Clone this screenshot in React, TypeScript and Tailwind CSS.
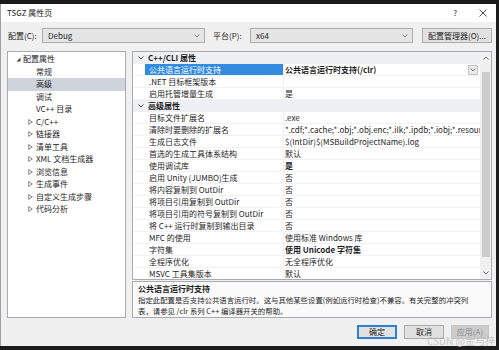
import React from 'react'

type Row = { cat?: string; name?: string; value?: string; bold?: boolean; selected?: boolean }

const rows: Row[] = [
  { cat: 'C++/CLI 属性' },
  { name: '公共语言运行时支持', value: '公共语言运行时支持(/clr)', bold: true, selected: true },
  { name: '.NET 目标框架版本', value: '' },
  { name: '启用托管增量生成', value: '是' },
  { cat: '高级属性' },
  { name: '目标文件扩展名', value: '.exe' },
  {
    name: '清除时要删除的扩展名',
    value: '*.cdf;*.cache;*.obj;*.obj.enc;*.ilk;*.ipdb;*.iobj;*.resources;*.tlb;*.tli;*.tlh;*.tmp;*.rsp;*.pgc',
  },
  { name: '生成日志文件', value: '$(IntDir)$(MSBuildProjectName).log' },
  { name: '首选的生成工具体系结构', value: '默认' },
  { name: '使用调试库', value: '是', bold: true },
  { name: '启用 Unity (JUMBO)生成', value: '否' },
  { name: '将内容复制到 OutDir', value: '否' },
  { name: '将项目引用复制到 OutDir', value: '否' },
  { name: '将项目引用的符号复制到 OutDir', value: '否' },
  { name: '将 C++ 运行时复制到输出目录', value: '否' },
  { name: 'MFC 的使用', value: '使用标准 Windows 库' },
  { name: '字符集', value: '使用 Unicode 字符集', bold: true },
  { name: '全程序优化', value: '无全程序优化' },
  { name: 'MSVC 工具集版本', value: '默认' },
]

const tree = [
  { label: '常规' },
  { label: '高级', selected: true },
  { label: '调试' },
  { label: 'VC++ 目录' },
  { label: 'C/C++', arrow: true },
  { label: '链接器', arrow: true },
  { label: '清单工具', arrow: true },
  { label: 'XML 文档生成器', arrow: true },
  { label: '浏览信息', arrow: true },
  { label: '生成事件', arrow: true },
  { label: '自定义生成步骤', arrow: true },
  { label: '代码分析', arrow: true },
]

function Chevron({ className = '' }: { className?: string }) {
  return (
    <svg width="6" height="4" viewBox="0 0 6 4" className={className}>
      <path d="M0.5 0.5 L3 3 L5.5 0.5" fill="none" stroke="currentColor" strokeWidth="0.9" />
    </svg>
  )
}

function Combo({ value }: { value: string }) {
  return (
    <div className="w-[163px] h-[15px] border border-[#adadad] bg-[#e5e5e5] flex items-center pl-[5px] pr-[4px]">
      <span className="flex-1 text-[8px] leading-[13px] text-[#1e1e1e]">{value}</span>
      <Chevron className="text-[#7a7a7a]" />
    </div>
  )
}

export default function App() {
  return (
    <div className="w-[499px] h-[350px] bg-[#1b1b1b] pt-[4px] pr-[3px] pb-[4px] overflow-hidden font-['Noto_Sans_CJK_SC',sans-serif] text-[#1e1e1e] relative">
      <div className="h-full bg-[#f0f0f0] border-l border-[#a0a0a0] flex flex-col">
        {/* Title bar */}
        <div className="h-[18px] bg-white flex items-center pl-[6px] pr-[9px]">
          <span className="flex-1 text-[8px] leading-[10px]">TSGZ 属性页</span>
          <span className="text-[8px] leading-[10px] mr-[22px]">?</span>
          <svg width="8" height="8" viewBox="0 0 8 8">
            <path d="M0.5 0.5 L7.5 7.5 M7.5 0.5 L0.5 7.5" stroke="#222" strokeWidth="0.8" />
          </svg>
        </div>

        {/* Config row */}
        <div className="mt-[6px] h-[15px] flex items-center pl-[7px]">
          <span className="w-[34px] text-[8px] leading-[10px]">配置(C):</span>
          <Combo value="Debug" />
          <span className="ml-[8px] w-[37px] text-[8px] leading-[10px]">平台(P):</span>
          <Combo value="x64" />
          <div className="ml-[9px] w-[70px] h-[15px] border border-[#adadad] bg-[#e1e1e1] flex items-center justify-center text-[8px] leading-[10px]">
            配置管理器(O)...
          </div>
        </div>

        {/* Body */}
        <div className="mt-[8px] h-[267px] flex">
          {/* Tree */}
          <div className="ml-[6px] w-[119px] border border-[#a8abb0] bg-white pt-[1px]">
            <div className="flex items-center h-[12.5px] pl-[8px]">
              <svg width="5" height="5" viewBox="0 0 5 5">
                <path d="M4.5 0.5 L4.5 4.5 L0.5 4.5 Z" fill="#444" />
              </svg>
              <span className="ml-[2px] text-[8px] leading-[10px]">配置属性</span>
            </div>
            {tree.map((t) => (
              <div
                key={t.label}
                className={`flex items-center h-[12.5px] ${t.arrow ? 'pl-[20px]' : 'pl-[28px]'} ${
                  t.selected ? 'bg-[#cfd3dc]' : ''
                }`}
              >
                {t.arrow && (
                  <svg width="5" height="6" viewBox="0 0 5 6" className="mr-[3px]">
                    <path d="M0.7 0.6 L4.3 3 L0.7 5.4 Z" fill="none" stroke="#555" strokeWidth="0.7" />
                  </svg>
                )}
                <span className="text-[8px] leading-[10px] whitespace-nowrap">{t.label}</span>
              </div>
            ))}
          </div>

          {/* Right panel */}
          <div className="ml-[6px] w-[360px] flex flex-col">
            <div className="h-[229px] border border-[#a8abb0] bg-white flex overflow-hidden">
              <div className="flex-1 overflow-hidden">
                {rows.map((r, i) =>
                  r.cat ? (
                    <div key={i} className="h-[12px] bg-[#eef0f4] flex items-center">
                      <div className="w-[15px] flex justify-center pl-[1px]">
                        <Chevron className="text-[#333]" />
                      </div>
                      <span className="text-[8px] leading-[10px] font-bold">{r.cat}</span>
                    </div>
                  ) : (
                    <div key={i} className="h-[12px] flex border-b border-[#f2f2f2]">
                      <div className="w-[12px]" />
                      <div
                        className={`w-[138px] pl-[4px] flex items-center whitespace-nowrap overflow-hidden ${
                          r.selected ? 'bg-[#338be0] text-white' : ''
                        }`}
                      >
                        <span className="text-[8px] leading-[10px]">{r.name}</span>
                      </div>
                      <div className="flex-1 border-l border-[#f0f0f0] pl-[1px] flex items-center whitespace-nowrap overflow-hidden">
                        <span className={`flex-1 text-[8px] leading-[10px] ${r.bold ? 'font-bold' : ''}`}>{r.value}</span>
                        {r.selected && (
                          <div className="w-[10px] h-[10px] mr-[2px] border border-[#c4c4c4] bg-[#ececec] flex items-center justify-center">
                            <Chevron className="text-[#666]" />
                          </div>
                        )}
                      </div>
                    </div>
                  ),
                )}
              </div>
              {/* Scrollbar */}
              <div className="w-[11px] bg-[#f0f0f0] flex flex-col items-center">
                <div className="h-[12px] flex items-center justify-center">
                  <Chevron className="text-[#606060] rotate-180" />
                </div>
                <div className="h-[8px]" />
                <div className="w-[8px] h-[185px] bg-[#cdcdcd]" />
                <div className="flex-1" />
                <div className="h-[12px] flex items-center justify-center">
                  <Chevron className="text-[#606060]" />
                </div>
              </div>
            </div>
            <div className="mt-[1px] flex-1 border border-[#a8abb0] bg-[#fafafa] pl-[5px] pt-[1px]">
              <div className="text-[8px] leading-[11px] font-bold">公共语言运行时支持</div>
              <div className="text-[7.4px] leading-[11px] whitespace-nowrap">
                指定此配置是否支持公共语言运行时。这与其他某些设置(例如运行时检查)不兼容。有关完整的冲突列
              </div>
              <div className="text-[7.4px] leading-[11px] whitespace-nowrap">表，请参见 /clr 系列 C++ 编译器开关的帮助。</div>
            </div>
          </div>
        </div>

        {/* Buttons */}
        <div className="mt-[7px] h-[14px] flex justify-end pr-[7px] gap-[7px]">
          <div className="w-[40px] h-[14px] border-2 border-[#2f7fd4] bg-[#e1e1e1] flex items-center justify-center text-[8px] leading-[10px]">
            确定
          </div>
          <div className="w-[40px] h-[14px] border border-[#adadad] bg-[#e1e1e1] flex items-center justify-center text-[8px] leading-[10px]">
            取消
          </div>
          <div className="w-[38px] h-[14px] border border-[#c4c4c4] bg-[#cccccc] flex items-center justify-center text-[8px] leading-[10px] text-[#8a8a8a]">
            应用(A)
          </div>
        </div>
      </div>
      <div className="absolute left-[427px] top-[335px] text-[10px] leading-[12px] text-[#c4c4c4] opacity-90 whitespace-nowrap">
        CSDN @金与梓
      </div>
    </div>
  )
}
